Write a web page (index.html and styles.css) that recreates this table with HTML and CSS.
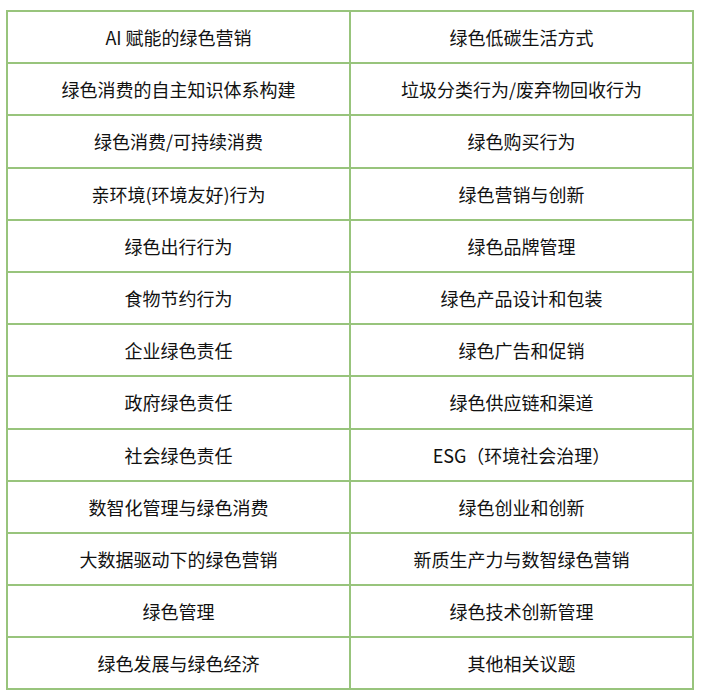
FILE: index.html
```html
<!DOCTYPE html>
<html lang="zh">
<head>
<meta charset="utf-8">
<link rel="stylesheet" href="styles.css">
</head>
<body>
<table class="topics">
<tr><td>AI 赋能的绿色营销</td><td>绿色低碳生活方式</td></tr>
<tr><td>绿色消费的自主知识体系构建</td><td>垃圾分类行为/废弃物回收行为</td></tr>
<tr><td>绿色消费/可持续消费</td><td>绿色购买行为</td></tr>
<tr><td>亲环境(环境友好)行为</td><td>绿色营销与创新</td></tr>
<tr><td>绿色出行行为</td><td>绿色品牌管理</td></tr>
<tr><td>食物节约行为</td><td>绿色产品设计和包装</td></tr>
<tr><td>企业绿色责任</td><td>绿色广告和促销</td></tr>
<tr><td>政府绿色责任</td><td>绿色供应链和渠道</td></tr>
<tr><td>社会绿色责任</td><td>ESG（环境社会治理）</td></tr>
<tr><td>数智化管理与绿色消费</td><td>绿色创业和创新</td></tr>
<tr><td>大数据驱动下的绿色营销</td><td>新质生产力与数智绿色营销</td></tr>
<tr><td>绿色管理</td><td>绿色技术创新管理</td></tr>
<tr><td>绿色发展与绿色经济</td><td>其他相关议题</td></tr>
</table>
</body>
</html>
```

FILE: styles.css
```css
html, body {
  margin: 0;
  padding: 0;
  background: #ffffff;
}
body {
  padding: 10px 0 0 6px;
  font-family: "Noto Sans CJK SC", "Noto Sans", sans-serif;
  color: #111111;
}
.topics {
  border-collapse: collapse;
  width: 688px;
  table-layout: fixed;
}
.topics td {
  border: 2px solid #98c47c;
  height: 50.2px;
  padding: 0;
  text-align: center;
  vertical-align: middle;
  font-size: 18px;
  line-height: 24px;
}
```
